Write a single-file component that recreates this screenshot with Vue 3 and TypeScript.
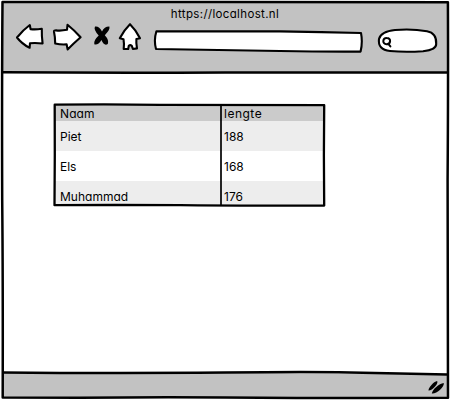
<script setup lang="ts">
interface Person {
  name: string
  height: number
}

const url: string = 'https://localhost.nl'
const people: Person[] = [
  { name: 'Piet', height: 188 },
  { name: 'Els', height: 168 },
  { name: 'Muhammad', height: 176 },
]
</script>

<template>
  <div class="window">
    <header class="chrome">
      <div class="title">{{ url }}</div>
      <nav class="toolbar">
        <svg class="icon back" width="30" height="28" viewBox="15 23 30 28">
          <path d="M17 37.5 Q23 30 29.8 25 L30.6 29.2 Q36 29.7 41.8 28.8 Q41.6 36 42.6 43.5 Q36 42.6 30 43.2 L29.6 47.8 Q22 44 17 37.5Z" />
        </svg>
        <svg class="icon forward" width="32" height="30" viewBox="52 22 32 30">
          <path d="M54 31.7 Q53.8 30.4 56 30.4 Q61 31 67 29.8 L67.5 24.8 Q74 30 80.6 37.3 Q73 44 67.6 49.4 L66.6 44.3 Q61 44.8 55.2 43.4 Q55.2 37 54 31.7Z" />
        </svg>
        <svg class="icon stop" width="20" height="24" viewBox="92 24 20 24">
          <path class="solid" d="M95 26.6 Q99 25.8 102 31.5 Q104.5 26.4 109.4 26.6 Q110.4 29.5 104.8 35.3 Q109.2 40 107.8 44 Q104 46.4 101.5 40 Q98 45.5 94.3 44.3 Q93.2 40.5 98.7 35.4 Q93.3 30 95 26.6Z" />
        </svg>
        <svg class="icon home" width="26" height="30" viewBox="117 22 26 30">
          <path d="M130 24.2 Q136 30 140 38.3 L136.4 39 Q136 43 137 48.4 L132.9 49 L131.8 45.8 Q130.2 44.6 128.8 45.8 L128.2 49 L123.7 49 Q124.4 44 123.5 39.2 L119.8 38.3 Q124 30 130 24.2Z" />
        </svg>
        <svg class="icon address" width="211" height="26" viewBox="153 28 211 26">
          <path d="M156.4 31.2 Q220 31.2 280 31.4 Q322 32 361 33 Q362.8 42 360.6 51.6 Q320 51.8 280 51 Q210 49.8 156 49 Q153.6 40 156.4 31.2Z" />
        </svg>
        <svg class="icon search" width="62" height="28" viewBox="376 27 62 28">
          <path d="M379 39 Q381 31.4 395 30 Q412 28.6 427 31.2 Q436.8 33 436.2 44 Q436.4 49.7 423 51.2 Q405 52.5 390 51 Q377.5 49.5 379 39Z" />
          <path class="lens" d="M386.8 38 C391.5 38 391 44.4 386.5 44.2 C382 44 382.4 37.9 386.8 38Z M388.3 43.8 L390.4 46.4" />
        </svg>
      </nav>
    </header>

    <main class="page">
      <div class="table-wrap">
        <div class="table-clip">
          <table>
            <thead>
              <tr>
                <th>Naam</th>
                <th>lengte</th>
              </tr>
            </thead>
            <tbody>
              <tr v-for="person in people" :key="person.name">
                <td>{{ person.name }}</td>
                <td>{{ person.height }}</td>
              </tr>
            </tbody>
          </table>
        </div>
        <svg class="table-lines" width="276" height="106" viewBox="51 102 276 106">
          <path d="M54.7 104.7 Q110 104.2 160 104.8 Q240 105 324.2 105.2 Q323.6 155 324.2 205.5 Q230 205.8 180 205.2 Q110 204.8 54.5 205.2 Q55 155 54.7 104.7Z" />
          <path class="divider" d="M221 105 L221 205" />
        </svg>
      </div>
    </main>

    <footer class="status">
      <svg class="grip" width="20" height="16" viewBox="426 379 20 16">
        <path d="M428.5 390.5 C428.3 387.6 433.6 381.6 437.2 381 C438.8 384 431.6 391 428.5 390.5Z" />
        <path d="M431.8 393.5 C432.4 389.6 439 383.6 443.8 383 C444.6 387 436 394.4 431.8 393.5Z" />
      </svg>
    </footer>

    <svg class="frame" width="450" height="400" viewBox="0 0 450 400">
      <path d="M0 0H450V400H0Z M2.5 2.3V397.5L448 397.8L447.7 2.3Z" class="margin" />
      <path class="wedge" d="M150 371H448V374.6L300 373.2Z" />
      <path d="M2.5 2 Q120 2.4 225 2.1 Q340 1.8 447.9 2.2 Q448.3 80 447.6 180 Q447.4 300 448 397.8 Q330 398.2 225 397.4 Q150 396.9 80 397.7 L2.7 397.5 Q3 280 2.2 200 Q1.8 90 2.5 2Z" />
      <path d="M3 72.3 Q110 73 225 72.5 Q340 72.2 447 72.5" />
      <path d="M3 372.4 Q100 373.3 225 372.6 Q300 371.6 350 372.4 Q400 373.2 447 374.4" />
    </svg>
  </div>
</template>

<style>
body {
  margin: 0;
  background: #fff;
}
</style>

<style scoped>
.window {
  position: relative;
  display: flex;
  flex-direction: column;
  width: 450px;
  height: 400px;
  overflow: hidden;
  background: #fff;
  color: #000;
  font-family: Inter, "Liberation Sans", sans-serif;
  font-feature-settings: "cv11";
  font-size: 12px;
}

.chrome {
  box-sizing: border-box;
  height: 73px;
  padding-top: 6px;
  background: #c2c2c2;
}

.title {
  height: 16px;
  line-height: 16px;
  text-align: center;
  font-size: 11.5px;
  letter-spacing: 0.35px;
}

.toolbar {
  display: flex;
  align-items: flex-start;
  padding-left: 15px;
}

.icon {
  flex: none;
  fill: #fff;
  stroke: #000;
  stroke-width: 2.1;
  stroke-linejoin: round;
  stroke-linecap: round;
}

.back {
  margin-top: 1px;
}

.forward {
  margin-left: 7px;
}

.stop {
  margin-top: 2px;
  margin-left: 8px;
}

.home {
  margin-left: 5px;
}

.address {
  margin-top: 6px;
  margin-left: 10px;
}

.search {
  margin-top: 5px;
  margin-left: 12px;
}

.solid {
  fill: #000;
  stroke: none;
}

.lens {
  fill: none;
  stroke-width: 2;
}

.page {
  flex: 1;
  padding: 31px 0 0 54px;
}

.table-wrap {
  position: relative;
  width: 271px;
  height: 102px;
}

.table-clip {
  height: 102px;
  overflow: hidden;
}

table {
  width: 271px;
  table-layout: fixed;
  border-collapse: collapse;
}

th,
td {
  padding: 2px 0 0 6px;
  text-align: left;
  vertical-align: middle;
  font-weight: 400;
}

th {
  line-height: 15px;
  letter-spacing: 0.1px;
  background: #cbcbcb;
}

th:first-child {
  width: 161px;
}

th + th,
td + td {
  padding-left: 3px;
}

th + th {
  letter-spacing: 0.5px;
}

td {
  line-height: 28px;
}

tbody tr:nth-child(odd) td {
  background: #ededed;
}

.table-lines {
  position: absolute;
  top: -2px;
  left: -3px;
  fill: none;
  stroke: #000;
  stroke-width: 2.3;
  stroke-linejoin: round;
}

.divider {
  stroke-width: 1.7;
}

.status {
  display: flex;
  box-sizing: border-box;
  justify-content: flex-end;
  height: 27px;
  padding: 6px 4px 0 0;
  background: #c2c2c2;
}

.grip {
  fill: #000;
}

.frame {
  position: absolute;
  top: 0;
  left: 0;
  fill: none;
  stroke: #000;
  stroke-width: 2.5;
  stroke-linejoin: round;
  pointer-events: none;
}

.frame .margin {
  fill: #fff;
  fill-rule: evenodd;
  stroke: none;
}

.frame .wedge {
  fill: #fff;
  stroke: none;
}
</style>
